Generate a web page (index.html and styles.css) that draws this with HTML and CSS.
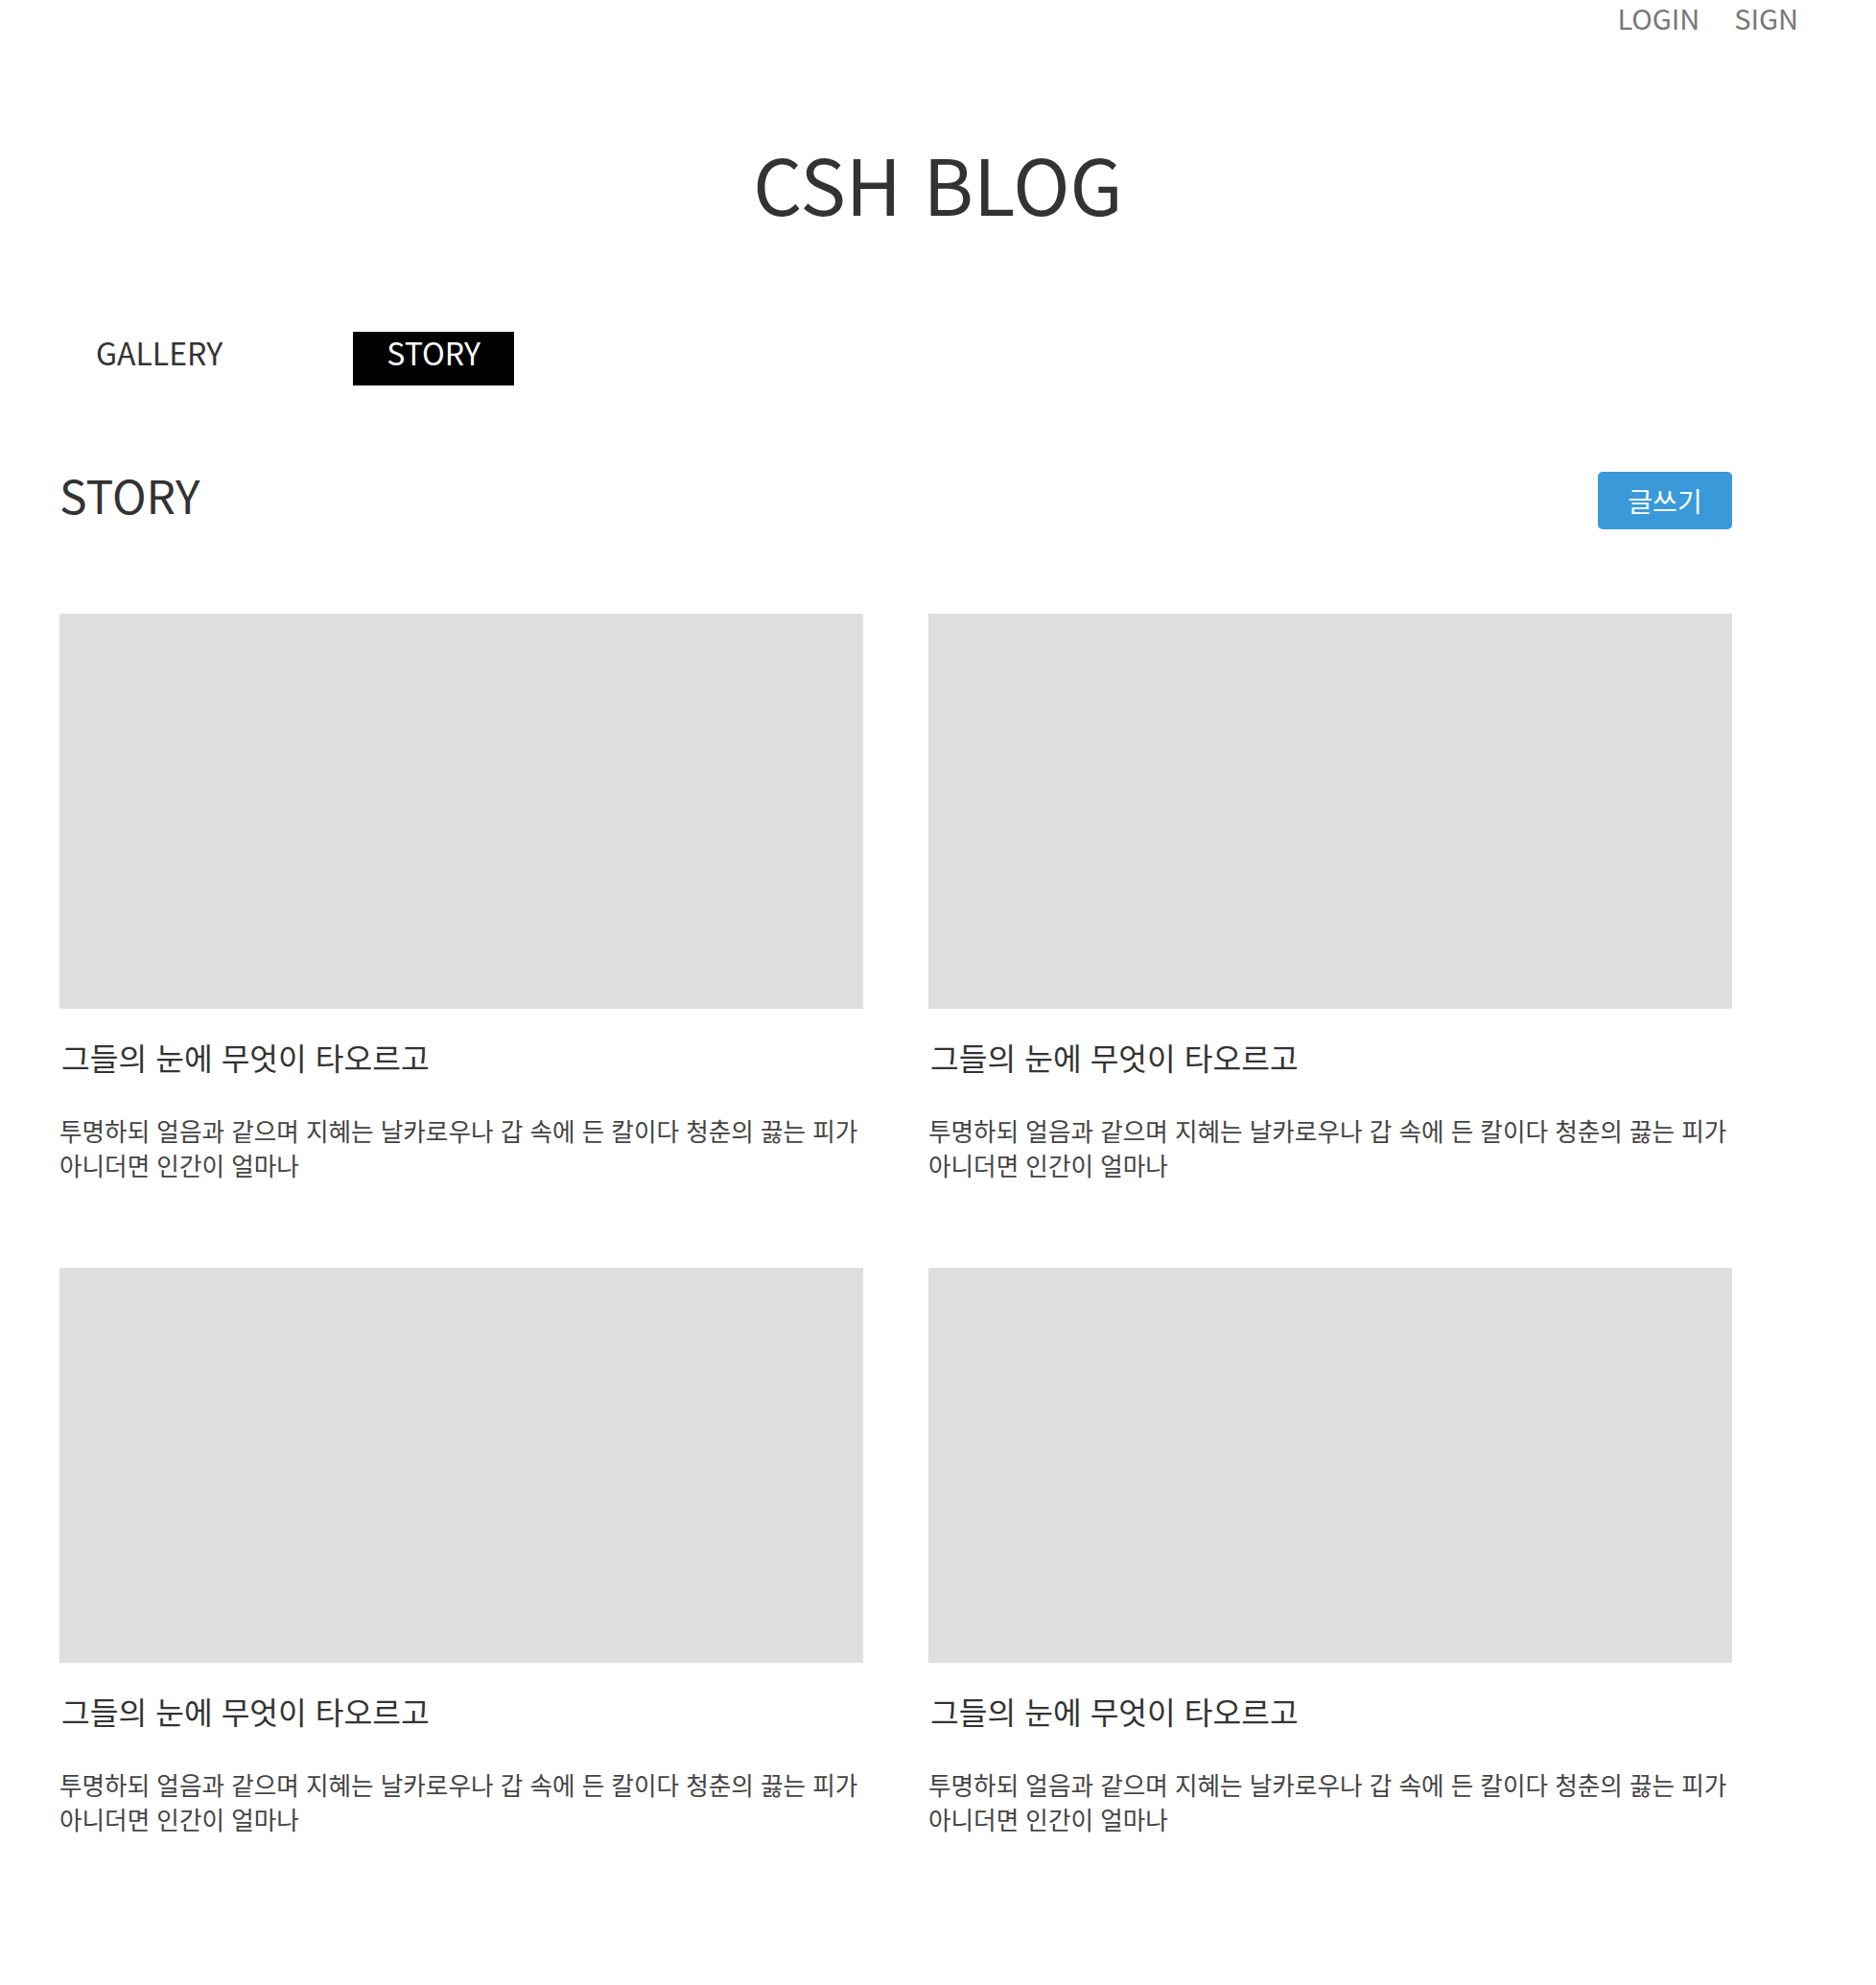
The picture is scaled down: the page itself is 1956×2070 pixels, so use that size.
FILE: index.html
```html
<!DOCTYPE html>
<html lang="ko">
<head>
<meta charset="utf-8">
<title>CSH BLOG</title>
<link rel="stylesheet" href="styles.css">
</head>
<body>
<header class="top-bar">
  <a class="top-link" href="#">LOGIN</a>
  <a class="top-link" href="#">SIGN</a>
</header>
<h1 class="site-title">CSH BLOG</h1>
<nav class="tabs">
  <a class="tab" href="#">GALLERY</a>
  <a class="tab tab-active" href="#">STORY</a>
</nav>
<main class="content">
  <div class="section-head">
    <h2 class="section-title">STORY</h2>
    <button class="write-btn" type="button">글쓰기</button>
  </div>
  <div class="card-grid">
    <article class="card">
      <div class="card-img"></div>
      <h3 class="card-title">그들의 눈에 무엇이 타오르고</h3>
      <p class="card-text">투명하되 얼음과 같으며 지혜는 날카로우나 갑 속에 든 칼이다 청춘의 끓는 피가 아니더면 인간이 얼마나</p>
    </article>
    <article class="card">
      <div class="card-img"></div>
      <h3 class="card-title">그들의 눈에 무엇이 타오르고</h3>
      <p class="card-text">투명하되 얼음과 같으며 지혜는 날카로우나 갑 속에 든 칼이다 청춘의 끓는 피가 아니더면 인간이 얼마나</p>
    </article>
    <article class="card">
      <div class="card-img"></div>
      <h3 class="card-title">그들의 눈에 무엇이 타오르고</h3>
      <p class="card-text">투명하되 얼음과 같으며 지혜는 날카로우나 갑 속에 든 칼이다 청춘의 끓는 피가 아니더면 인간이 얼마나</p>
    </article>
    <article class="card">
      <div class="card-img"></div>
      <h3 class="card-title">그들의 눈에 무엇이 타오르고</h3>
      <p class="card-text">투명하되 얼음과 같으며 지혜는 날카로우나 갑 속에 든 칼이다 청춘의 끓는 피가 아니더면 인간이 얼마나</p>
    </article>
  </div>
</main>
</body>
</html>
```
FILE: styles.css
```css
* { box-sizing: border-box; }
html, body { margin: 0; padding: 0; background: #fff; }
body {
  font-family: "Noto Sans CJK KR", "Noto Sans", sans-serif;
  color: #333;
}
a { text-decoration: none; }

.top-bar {
  display: flex;
  justify-content: flex-end;
  gap: 36px;
  padding-right: 81px;
  height: 34px;
}
.top-link {
  font-size: 29px;
  line-height: 36px;
  color: #777;
}

.site-title {
  margin: 116px 0 0;
  text-align: center;
  font-size: 80px;
  line-height: 80px;
  font-weight: 400;
  color: #333;
}

.tabs {
  display: flex;
  gap: 101px;
  margin-top: 116px;
  padding-left: 65px;
}
.tab {
  display: block;
  height: 56px;
  padding: 0 35px 14px;
  font-size: 32px;
  line-height: 42px;
  color: #333;
}
.tab-active { background: #000; color: #fff; }

.content {
  width: 1744px;
  margin-left: 62px;
}

.section-head {
  display: flex;
  justify-content: space-between;
  align-items: flex-start;
  margin-top: 83px;
}
.section-title {
  margin: 0;
  font-size: 48px;
  line-height: 60px;
  font-weight: 400;
  color: #333;
}
.write-btn {
  margin-top: 7px;
  width: 140px;
  height: 60px;
  border: 0;
  border-radius: 5px;
  background: #3a9ad9;
  color: #fff;
  font-family: inherit;
  font-size: 28px;
  line-height: 60px;
  padding: 0;
}

.card-grid {
  display: grid;
  grid-template-columns: 1fr 1fr;
  column-gap: 68px;
  row-gap: 88px;
  margin-top: 88px;
}
.card-img {
  height: 412px;
  background: #dfdfdf;
}
.card-title {
  margin: 28px 0 0 2px;
  font-size: 32.3px;
  line-height: 45px;
  font-weight: 400;
  color: #333;
}
.card-text {
  margin: 36px 0 0;
  font-size: 25.6px;
  line-height: 36.4px;
  color: #444;
  word-break: keep-all;
}
```
